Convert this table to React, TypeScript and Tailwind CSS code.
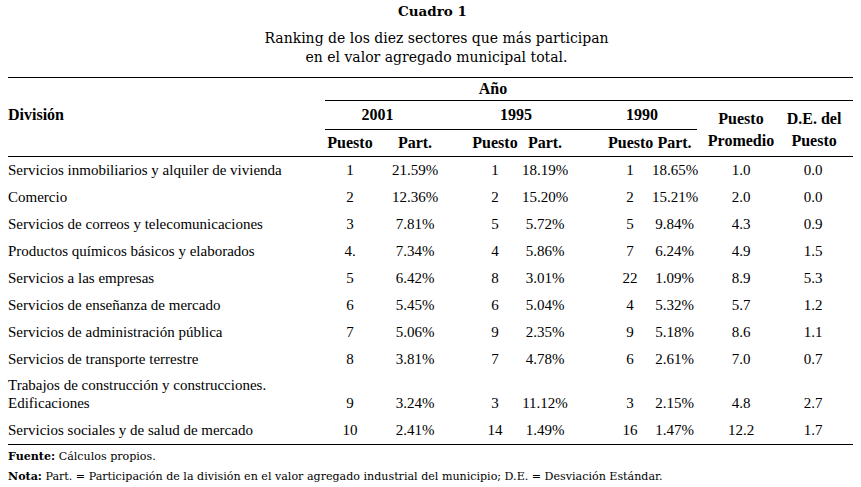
import React from "react"

type Row = {
  division: string[]
  vals: string[]
}

const rows: Row[] = [
  { division: ["Servicios inmobiliarios y alquiler de vivienda"], vals: ["1", "21.59%", "1", "18.19%", "1", "18.65%", "1.0", "0.0"] },
  { division: ["Comercio"], vals: ["2", "12.36%", "2", "15.20%", "2", "15.21%", "2.0", "0.0"] },
  { division: ["Servicios de correos y telecomunicaciones"], vals: ["3", "7.81%", "5", "5.72%", "5", "9.84%", "4.3", "0.9"] },
  { division: ["Productos químicos básicos y elaborados"], vals: ["4.", "7.34%", "4", "5.86%", "7", "6.24%", "4.9", "1.5"] },
  { division: ["Servicios a las empresas"], vals: ["5", "6.42%", "8", "3.01%", "22", "1.09%", "8.9", "5.3"] },
  { division: ["Servicios de enseñanza de mercado"], vals: ["6", "5.45%", "6", "5.04%", "4", "5.32%", "5.7", "1.2"] },
  { division: ["Servicios de administración pública"], vals: ["7", "5.06%", "9", "2.35%", "9", "5.18%", "8.6", "1.1"] },
  { division: ["Servicios de transporte terrestre"], vals: ["8", "3.81%", "7", "4.78%", "6", "2.61%", "7.0", "0.7"] },
  { division: ["Trabajos de construcción y construcciones.", "Edificaciones"], vals: ["9", "3.24%", "3", "11.12%", "3", "2.15%", "4.8", "2.7"] },
  { division: ["Servicios sociales y de salud de mercado"], vals: ["10", "2.41%", "14", "1.49%", "16", "1.47%", "12.2", "1.7"] },
]

// padding per value column so the text sits where the original columns centre
const valPad = ["", "pr-[15px]", "", "pr-[38px]", "", "", "", "pr-[12px]"]

const serif = "font-['Liberation_Serif',serif]"
const titleFont = "font-['DejaVu_Serif',serif]"

export default function App() {
  return (
    <div className="w-[861px] h-[487px] bg-white text-black overflow-hidden">
      <div className={`${titleFont} text-center`}>
        <div className="pt-[1px] pl-[4px] text-[13.5px] leading-[20px] font-bold">Cuadro 1</div>
        <div className="mt-[8px] pl-[12px] text-[14px] leading-[19px]">
          <div>Ranking de los diez sectores que más participan</div>
          <div>en el valor agregado municipal total.</div>
        </div>
      </div>

      <table className={`${serif} ml-[8px] mt-[10px] w-[845px] table-fixed border-collapse`}>
        <colgroup>
          <col className="w-[317px]" />
          <col className="w-[50px]" />
          <col className="w-[95px]" />
          <col className="w-[50px]" />
          <col className="w-[88px]" />
          <col className="w-[44px]" />
          <col className="w-[45px]" />
          <col className="w-[88px]" />
          <col className="w-[68px]" />
        </colgroup>
        <thead className="text-[16px] font-bold">
          <tr className="h-[23px]">
            <th rowSpan={3} className="border-y border-black text-left font-bold align-middle pb-[4px]">División</th>
            <th colSpan={8} className="border-y border-black text-center pr-[192px] leading-[20px]">Año</th>
          </tr>
          <tr className="h-[29px]">
            <th colSpan={2} className="border-b border-black text-center pr-[40px]">2001</th>
            <th colSpan={2} className="border-b border-black text-center pr-[46px]">1995</th>
            <th colSpan={2} className="border-b border-black text-center pr-[21px]">1990</th>
            <th rowSpan={2} className="border-b border-black text-center leading-[22px] pt-[2px]">
              Puesto
              <br />
              Promedio
            </th>
            <th rowSpan={2} className="border-b border-black text-center leading-[22px] pt-[2px] pr-[10px]">
              D.E. del
              <br />
              Puesto
            </th>
          </tr>
          <tr className="h-[27px]">
            <th className="border-b border-black text-center">Puesto</th>
            <th className="border-b border-black text-center pr-[15px]">Part.</th>
            <th className="border-b border-black text-center">Puesto</th>
            <th className="border-b border-black text-center pr-[38px]">Part.</th>
            <th className="border-b border-black text-center whitespace-nowrap">Puesto</th>
            <th className="border-b border-black text-center">Part.</th>
          </tr>
        </thead>
        <tbody className="text-[15px]">
          {rows.map((r, i) => {
            const two = r.division.length > 1
            const last = i === rows.length - 1
            const cellBase = two ? "align-bottom pb-[6px] leading-[18px]" : "align-middle leading-[18px] pb-[1px]"
            return (
              <tr key={i} className={two ? "h-[45px]" : "h-[27px]"}>
                <td className={`${cellBase} ${last ? "border-b border-black" : ""} whitespace-nowrap`}>
                  {r.division.map((d, j) => (
                    <div key={j}>{d}</div>
                  ))}
                </td>
                {r.vals.map((v, j) => (
                  <td key={j} className={`${cellBase} ${valPad[j]} ${last ? "border-b border-black" : ""} text-center whitespace-nowrap`}>
                    {v}
                  </td>
                ))}
              </tr>
            )
          })}
        </tbody>
      </table>

      <div className={`${titleFont} pl-[8px] text-[11.1px]`}>
        <div className="leading-[20px] mt-[2px]">
          <span className="font-bold">Fuente:</span> Cálculos propios.
        </div>
        <div className="leading-[20px]">
          <span className="font-bold">Nota:</span> Part. = Participación de la división en el valor agregado industrial del municipio; D.E. = Desviación Estándar.
        </div>
      </div>
    </div>
  )
}
